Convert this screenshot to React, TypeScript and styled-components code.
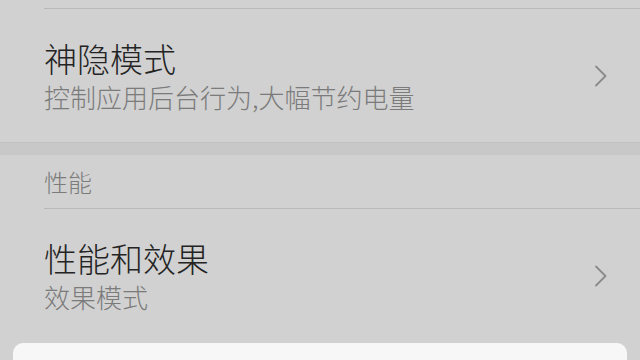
import React from "react";
import styled, { createGlobalStyle } from "styled-components";

const Global = createGlobalStyle`
  html, body { margin: 0; padding: 0; }
  body {
    background: #d1d1d1;
    font-family: "Noto Sans CJK SC", "Noto Sans", sans-serif;
  }
`;

const Page = styled.div`
  width: 640px;
  height: 360px;
  overflow: hidden;
  background: #d1d1d1;
  display: flex;
  flex-direction: column;
`;

const TopStub = styled.div`
  height: 8px;
  flex: none;
`;

const Divider = styled.div`
  height: 1px;
  margin-left: 44px;
  background: #b9b9b9;
  flex: none;
`;

const Item = styled.div`
  height: 133px;
  flex: none;
  display: flex;
  align-items: center;
  padding: 0 32px 0 44px;
  box-sizing: border-box;
`;

const Texts = styled.div`
  flex: 1;
  display: flex;
  flex-direction: column;
  gap: 2px;
`;

const Title = styled.div`
  font-size: 33px;
  line-height: 40px;
  font-weight: 300;
  color: #242424;
`;

const Subtitle = styled.div`
  font-size: 26px;
  line-height: 34px;
  font-weight: 300;
  color: #7b7b7b;
`;

const Band = styled.div`
  height: 12px;
  flex: none;
  background: #c8c8c8;
  border-top: 1px solid #c2c2c2;
`;

const Header = styled.div`
  height: 53px;
  flex: none;
  display: flex;
  align-items: center;
  padding-left: 44px;
  font-size: 24px;
  font-weight: 300;
  color: #7b7b7b;
`;

const Card = styled.div`
  margin: 1px 13px 0;
  flex: 1;
  background: #f7f7f7;
  border-radius: 10px 10px 0 0;
`;

const Chevron = () => (
  <svg width="14" height="22" viewBox="0 0 14 22" fill="none">
    <path d="M2 1.5 L11.5 11 L2 20.5" stroke="#8a8a8a" strokeWidth="1.8" strokeLinecap="round" strokeLinejoin="round" />
  </svg>
);

export default function App() {
  return (
    <>
      <Global />
      <Page>
        <TopStub />
        <Divider />
        <Item>
          <Texts>
            <Title>神隐模式</Title>
            <Subtitle>控制应用后台行为,大幅节约电量</Subtitle>
          </Texts>
          <Chevron />
        </Item>
        <Band />
        <Header>性能</Header>
        <Divider />
        <Item>
          <Texts>
            <Title>性能和效果</Title>
            <Subtitle>效果模式</Subtitle>
          </Texts>
          <Chevron />
        </Item>
        <Card />
      </Page>
    </>
  );
}
